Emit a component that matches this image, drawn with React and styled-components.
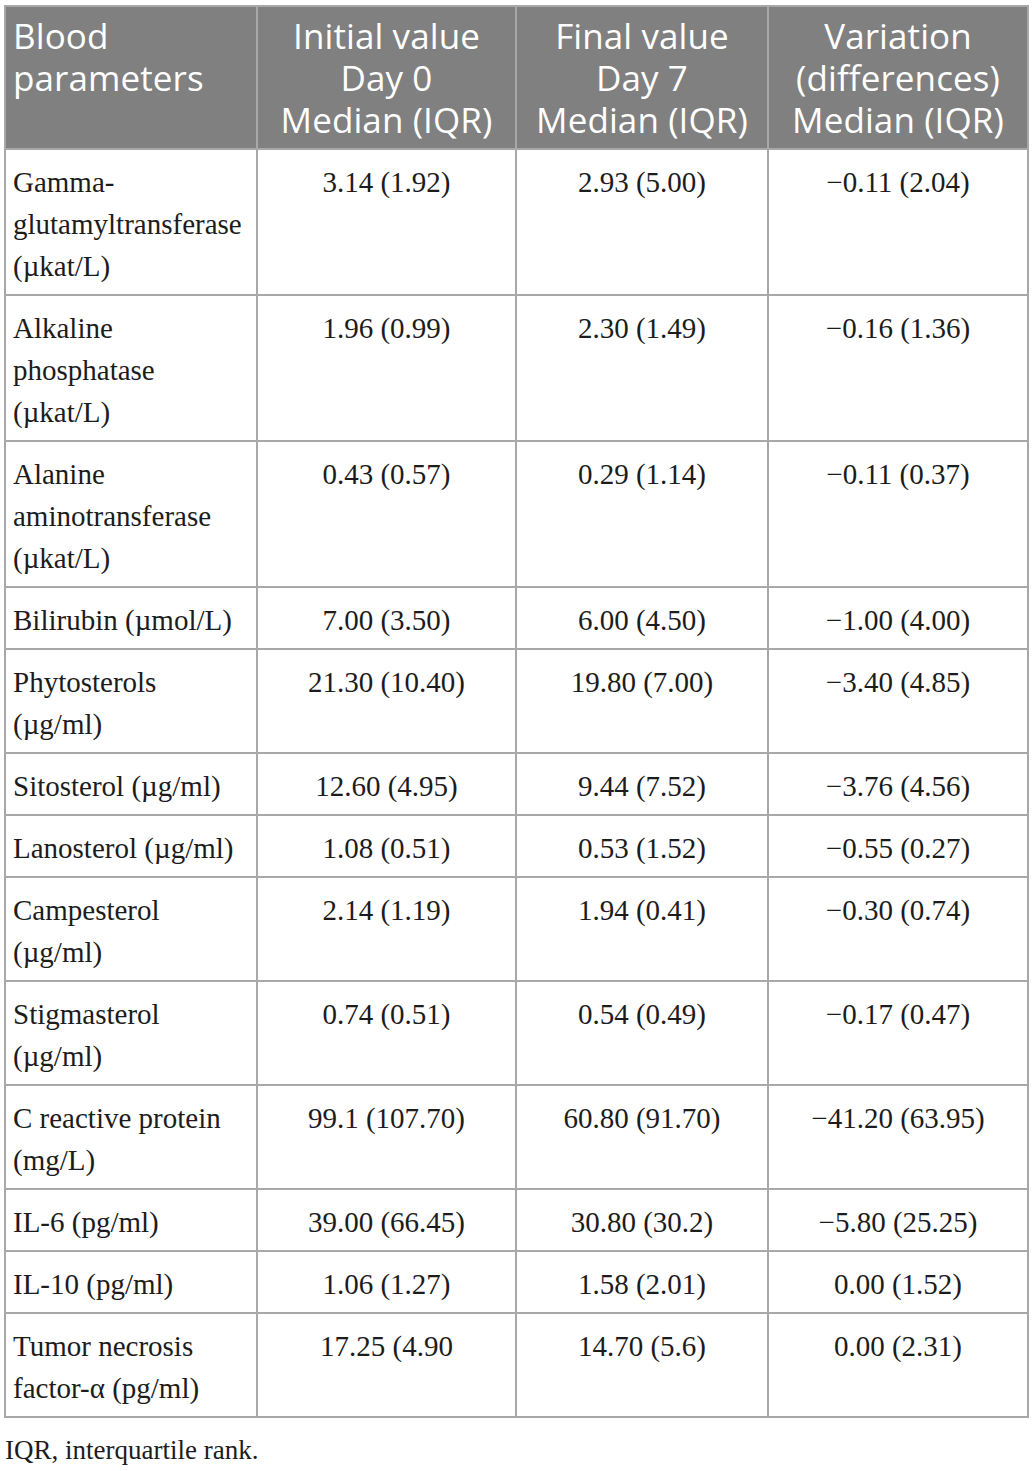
import React from "react";
import styled, { createGlobalStyle } from "styled-components";

const Global = createGlobalStyle`
  html, body { margin: 0; padding: 0; background: #ffffff; }
  body { font-family: "Liberation Serif", "Times New Roman", serif; }
`;

const Page = styled.div`
  width: 1033px;
  padding: 5px 6px 0 4px;
  box-sizing: border-box;
`;

const Table = styled.table`
  width: 1023px;
  border-collapse: collapse;
  table-layout: fixed;
  border: 2px solid #a8a8a8;
`;

const Col = styled.col`
  width: ${(p) => p.$w}px;
`;

const HeadCell = styled.th`
  background: #808080;
  color: #ffffff;
  font-family: "Open Sans", "Noto Sans", sans-serif;
  font-weight: 400;
  font-size: 35px;
  line-height: 42px;
  padding: 8px 7px 7px;
  border: 2px solid #a8a8a8;
  text-align: ${(p) => (p.$left ? "left" : "center")};
  vertical-align: top;
  letter-spacing: 0.1px;
`;

const Cell = styled.td`
  font-family: "Liberation Serif", "Times New Roman", serif;
  font-size: 29px;
  line-height: 42px;
  color: #1c1c1c;
  padding: 11px 7px 7px;
  border: 2px solid #a8a8a8;
  text-align: ${(p) => (p.$left ? "left" : "center")};
  vertical-align: top;
`;

const Note = styled.p`
  margin: 14px 0 0 1px;
  font-family: "Liberation Serif", "Times New Roman", serif;
  font-size: 27px;
  line-height: 36px;
  color: #1c1c1c;
`;

const rows = [
  [["Gamma-", "glutamyltransferase", "(\u00b5kat/L)"], "3.14 (1.92)", "2.93 (5.00)", "\u22120.11 (2.04)"],
  [["Alkaline", "phosphatase", "(\u00b5kat/L)"], "1.96 (0.99)", "2.30 (1.49)", "\u22120.16 (1.36)"],
  [["Alanine", "aminotransferase", "(\u00b5kat/L)"], "0.43 (0.57)", "0.29 (1.14)", "\u22120.11 (0.37)"],
  [["Bilirubin (\u00b5mol/L)"], "7.00 (3.50)", "6.00 (4.50)", "\u22121.00 (4.00)"],
  [["Phytosterols", "(\u00b5g/ml)"], "21.30 (10.40)", "19.80 (7.00)", "\u22123.40 (4.85)"],
  [["Sitosterol (\u00b5g/ml)"], "12.60 (4.95)", "9.44 (7.52)", "\u22123.76 (4.56)"],
  [["Lanosterol (\u00b5g/ml)"], "1.08 (0.51)", "0.53 (1.52)", "\u22120.55 (0.27)"],
  [["Campesterol", "(\u00b5g/ml)"], "2.14 (1.19)", "1.94 (0.41)", "\u22120.30 (0.74)"],
  [["Stigmasterol", "(\u00b5g/ml)"], "0.74 (0.51)", "0.54 (0.49)", "\u22120.17 (0.47)"],
  [["C reactive protein", "(mg/L)"], "99.1 (107.70)", "60.80 (91.70)", "\u221241.20 (63.95)"],
  [["IL-6 (pg/ml)"], "39.00 (66.45)", "30.80 (30.2)", "\u22125.80 (25.25)"],
  [["IL-10 (pg/ml)"], "1.06 (1.27)", "1.58 (2.01)", "0.00 (1.52)"],
  [["Tumor necrosis", "factor-\u03b1 (pg/ml)"], "17.25 (4.90", "14.70 (5.6)", "0.00 (2.31)"],
];

const Lines = ({ lines }) =>
  lines.map((l, i) => (
    <React.Fragment key={i}>
      {i > 0 && <br />}
      {l}
    </React.Fragment>
  ));

export default function App() {
  return (
    <Page>
      <Global />
      <Table>
        <colgroup>
          <Col $w={252} />
          <Col $w={259} />
          <Col $w={252} />
          <Col $w={260} />
        </colgroup>
        <thead>
          <tr>
            <HeadCell $left>
              <Lines lines={["Blood", "parameters"]} />
            </HeadCell>
            <HeadCell>
              <Lines lines={["Initial value", "Day 0", "Median (IQR)"]} />
            </HeadCell>
            <HeadCell>
              <Lines lines={["Final value", "Day 7", "Median (IQR)"]} />
            </HeadCell>
            <HeadCell>
              <Lines lines={["Variation", "(differences)", "Median (IQR)"]} />
            </HeadCell>
          </tr>
        </thead>
        <tbody>
          {rows.map((r, i) => (
            <tr key={i}>
              <Cell $left>
                <Lines lines={r[0]} />
              </Cell>
              <Cell>{r[1]}</Cell>
              <Cell>{r[2]}</Cell>
              <Cell>{r[3]}</Cell>
            </tr>
          ))}
        </tbody>
      </Table>
      <Note>IQR, interquartile rank.</Note>
    </Page>
  );
}
